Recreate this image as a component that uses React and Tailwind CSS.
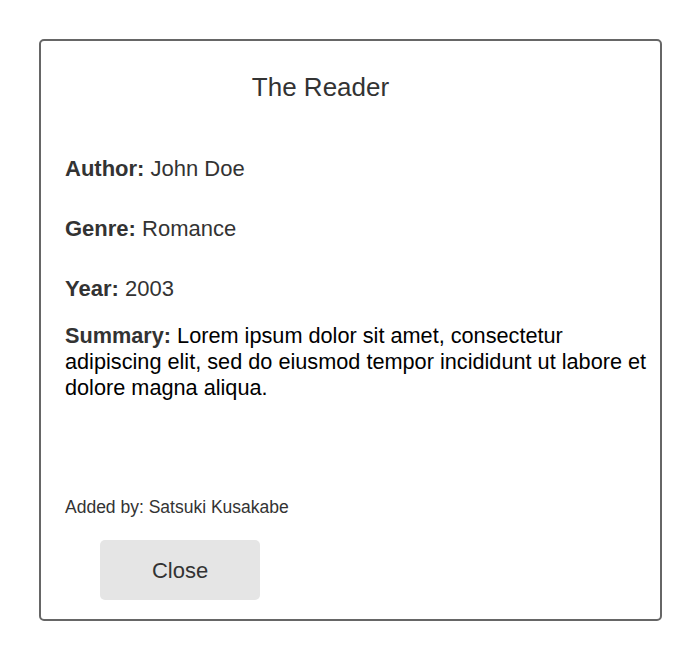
import React from 'react';

const Field = ({ label, children, className = '' }) => (
  <p className={`text-[22px] leading-[26px] text-[#333] ${className}`}>
    <span className="font-bold">{label}:</span> {children}
  </p>
);

const BookDetails = () => {
  return (
    <div className="bg-white w-[700px] h-[660px] pt-[39px] pl-[39px] font-['Liberation_Sans',Arial,sans-serif]">
      <div className="w-[623px] h-[582px] border-2 border-[#666] rounded-[5px] bg-white flex flex-col pl-[24px] pr-[4px]">
        <h2 className="mt-[30px] pr-[80px] text-center text-[26px] leading-[32px] text-[#333]">The Reader</h2>
        <Field label="Author" className="mt-[53px]">John Doe</Field>
        <Field label="Genre" className="mt-[34px]">Romance</Field>
        <Field label="Year" className="mt-[34px]">2003</Field>
        <p className="mt-[21px] text-[21.7px] leading-[26px] text-black">
          <span className="font-bold text-[#333]">Summary:</span> Lorem ipsum dolor sit amet, consectetur adipiscing elit, sed do eiusmod tempor incididunt ut labore et dolore magna aliqua.
        </p>
        <p className="mt-[96px] text-[17.5px] leading-[20px] text-[#333]">Added by: Satsuki Kusakabe</p>
        <button
          type="button"
          className="mt-[23px] ml-[35px] w-[160px] h-[60px] rounded-[5px] bg-[#e5e5e5] text-[22px] text-[#333]"
        >
          Close
        </button>
      </div>
    </div>
  );
};

export default BookDetails;
